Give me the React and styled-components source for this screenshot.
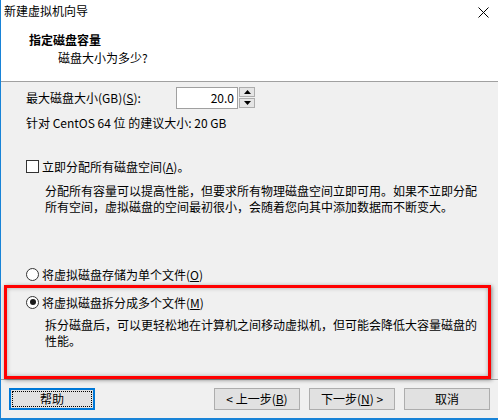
import React from 'react';
import styled, { createGlobalStyle } from 'styled-components';

const GlobalStyle = createGlobalStyle`
  html, body {
    margin: 0;
    padding: 0;
    background: #ffffff;
  }
  body {
    font-family: "Noto Sans CJK SC", "Noto Sans", sans-serif;
    font-size: 12px;
    color: #000;
  }
`;

const Window = styled.div`
  box-sizing: border-box;
  width: 498px;
  height: 420px;
  display: flex;
  flex-direction: column;
  border-left: 1px solid #1883d7;
  border-bottom: 2px solid #1883d7;
  background: #f0f0f0;
  overflow: hidden;
`;

const Header = styled.div`
  height: 81px;
  background: #fff;
  border-bottom: 1px solid #a0a0a0;
  display: flex;
  flex-direction: column;
  flex-shrink: 0;
`;

const TitleBar = styled.div`
  height: 22px;
  display: flex;
  align-items: center;
  justify-content: space-between;
  padding: 0 9px 0 3px;
  line-height: 16px;
`;

const Close = styled.svg`
  width: 11px;
  height: 11px;
  margin-top: 2px;
`;

const Heading = styled.div`
  margin: 10px 0 0 28px;
  font-weight: 700;
  line-height: 16px;
`;

const SubHeading = styled.div`
  margin: 2px 0 0 57px;
  line-height: 16px;
`;

const Body = styled.div`
  flex: 1;
  display: flex;
  flex-direction: column;
  padding: 5px 7px 0 3px;
  border-bottom: 1px solid #a0a0a0;
`;

const Indent = styled.div`
  padding-left: 22px;
`;

const SizeRow = styled(Indent)`
  display: flex;
  align-items: center;
  height: 22px;
`;

const Label = styled.span`
  width: 150px;
  line-height: 16px;
`;

const Spinner = styled.div`
  display: flex;
  align-items: stretch;
  height: 22px;
`;

const NumberBox = styled.div`
  box-sizing: border-box;
  width: 62px;
  border: 1px solid #a0a0a0;
  background: #fff;
  text-align: right;
  padding: 2px 3px 0 0;
  line-height: 16px;
`;

const SpinButtons = styled.div`
  display: flex;
  flex-direction: column;
  gap: 1px;
  margin-left: 1px;
`;

const SpinButton = styled.div`
  box-sizing: border-box;
  width: 16px;
  height: 10px;
  border: 1px solid #adadad;
  background: #e5e5e5;
  display: flex;
  align-items: center;
  justify-content: center;
`;

const Line = styled(Indent)`
  line-height: 16px;
  margin-top: ${(p) => p.$top || 0}px;
`;

const OptionRow = styled(Indent)`
  display: flex;
  align-items: center;
  gap: 3px;
  height: 16px;
  margin-top: ${(p) => p.$top || 0}px;
`;

const CheckBox = styled.span`
  box-sizing: border-box;
  width: 13px;
  height: 13px;
  border: 1px solid #333;
  background: #fff;
`;

const Radio = styled.span`
  box-sizing: border-box;
  width: 13px;
  height: 13px;
  border: 1px solid #333;
  border-radius: 50%;
  background: #fff;
  display: flex;
  align-items: center;
  justify-content: center;

  &::after {
    content: '';
    width: 6px;
    height: 6px;
    border-radius: 50%;
    background: ${(p) => (p.$checked ? '#1a1a1a' : 'transparent')};
  }
`;

const Desc = styled.div`
  padding-left: 41px;
  line-height: 16px;
  margin-top: ${(p) => p.$top || 0}px;
`;

const Key = styled.u`
  text-underline-offset: 1px;
`;

const Highlight = styled.div`
  flex: 1;
  margin-top: 3px;
  border: 3px solid #ff0000;
  box-shadow: 1px 1px 4px rgba(0, 0, 0, 0.45), inset 0 0 4px rgba(0, 0, 0, 0.3);
  padding-top: 6px;
`;

const HighlightRow = styled(OptionRow)`
  padding-left: 19px;
`;

const HighlightDesc = styled(Desc)`
  padding-left: 38px;
`;

const Footer = styled.div`
  height: 38px;
  display: flex;
  align-items: flex-start;
  padding: 8px 0 0 8px;
  box-sizing: border-box;
`;

const Button = styled.div`
  box-sizing: border-box;
  width: 86px;
  height: 22px;
  border: 1px solid #adadad;
  background: #e1e1e1;
  display: flex;
  align-items: center;
  justify-content: center;
  line-height: 16px;
  margin-left: ${(p) => p.$gap || 0}px;
`;

const FocusButton = styled(Button)`
  border: 2px solid #0078d7;
  padding: 1px;
`;

const FocusRing = styled.span`
  box-sizing: border-box;
  width: 100%;
  height: 100%;
  border: 1px dotted #000;
  display: flex;
  align-items: center;
  justify-content: center;
`;

const Tri = ({ up }) => (
  <svg width="7" height="4" viewBox="0 0 7 4">
    <path d={up ? 'M0 4 L3.5 0 L7 4 Z' : 'M0 0 L3.5 4 L7 0 Z'} fill="#000" />
  </svg>
);

export default function App() {
  return (
    <>
      <GlobalStyle />
      <Window>
        <Header>
          <TitleBar>
            <span>新建虚拟机向导</span>
            <Close viewBox="0 0 11 11">
              <path d="M0.5 0.5 L10.5 10.5 M10.5 0.5 L0.5 10.5" stroke="#000" strokeWidth="1" />
            </Close>
          </TitleBar>
          <Heading>指定磁盘容量</Heading>
          <SubHeading>磁盘大小为多少?</SubHeading>
        </Header>

        <Body>
          <SizeRow>
            <Label>
              最大磁盘大小(GB)(<Key>S</Key>):
            </Label>
            <Spinner>
              <NumberBox>20.0</NumberBox>
              <SpinButtons>
                <SpinButton>
                  <Tri up />
                </SpinButton>
                <SpinButton>
                  <Tri />
                </SpinButton>
              </SpinButtons>
            </Spinner>
          </SizeRow>
          <Line $top={6}>针对 CentOS 64 位 的建议大小: 20 GB</Line>

          <OptionRow $top={27}>
            <CheckBox />
            <span>
              立即分配所有磁盘空间(<Key>A</Key>)。
            </span>
          </OptionRow>
          <Desc $top={9}>
            分配所有容量可以提高性能，但要求所有物理磁盘空间立即可用。如果不立即分配
            <br />
            所有空间，虚拟磁盘的空间最初很小，会随着您向其中添加数据而不断变大。
          </Desc>

          <OptionRow $top={51}>
            <Radio />
            <span>
              将虚拟磁盘存储为单个文件(<Key>O</Key>)
            </span>
          </OptionRow>

          <Highlight>
            <HighlightRow>
              <Radio $checked />
              <span>
                将虚拟磁盘拆分成多个文件(<Key>M</Key>)
              </span>
            </HighlightRow>
            <HighlightDesc $top={7}>
              拆分磁盘后，可以更轻松地在计算机之间移动虚拟机，但可能会降低大容量磁盘的
              <br />
              性能。
            </HighlightDesc>
          </Highlight>
        </Body>

        <Footer>
          <FocusButton>
            <FocusRing>帮助</FocusRing>
          </FocusButton>
          <Button $gap={119}>
            &lt; 上一步(<Key>B</Key>)
          </Button>
          <Button $gap={9}>
            下一步(<Key>N</Key>) &gt;
          </Button>
          <Button $gap={9}>取消</Button>
        </Footer>
      </Window>
    </>
  );
}
